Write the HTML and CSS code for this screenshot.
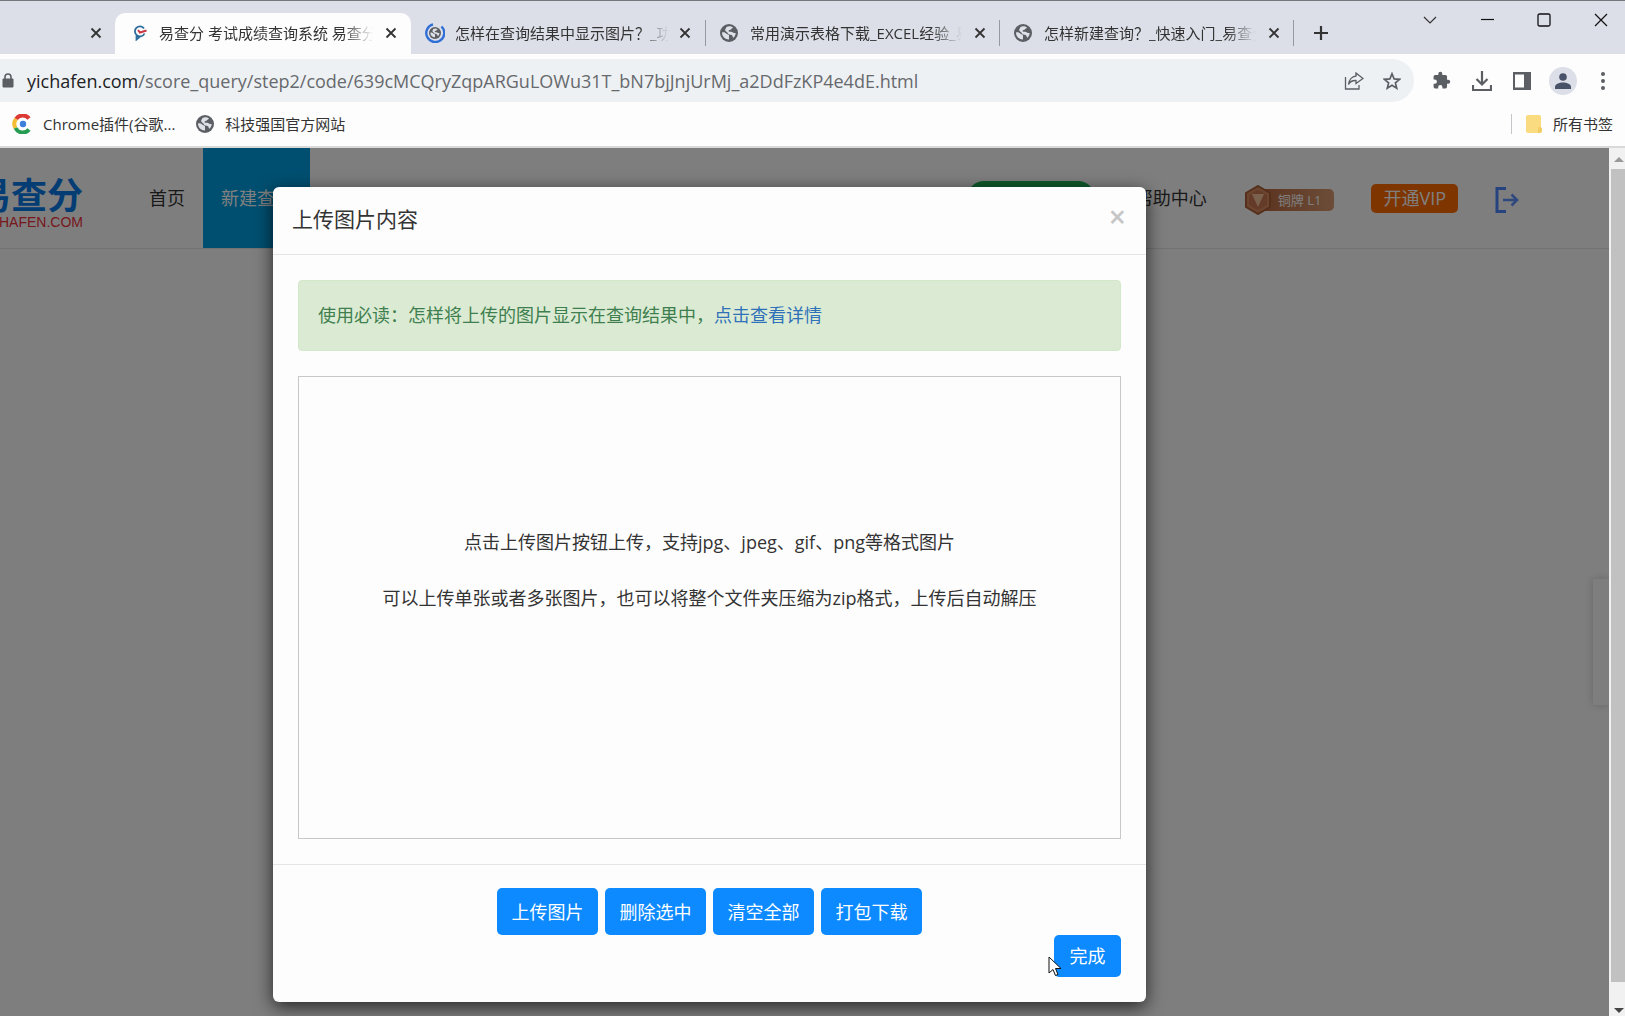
FILE: index.html
```html
<!DOCTYPE html>
<html lang="zh-CN">
<head>
<meta charset="utf-8">
<title>易查分 考试成绩查询系统</title>
<link rel="stylesheet" href="styles.css">
</head>
<body>
<svg class="defs" aria-hidden="true">
  <symbol id="x" viewBox="0 0 12 12"><path d="M1.5 1.5l9 9M10.5 1.5l-9 9" stroke="currentColor" stroke-width="1.8" fill="none"/></symbol>
  <symbol id="globe" viewBox="0 0 18 18"><circle cx="9" cy="9" r="9" fill="#5b5e63"/><path d="M2 8.500c2-.5 3.500.2 4.500 1.300 1 1 2.500.5 2.500 2v3.700C5 15.500 2 12.500 2 8.500zM6.500 3C8 2 11 1.800 13 3.500c-.5 1-1.500.8-2 1.700-.5 1-2 .5-2.500 1.500-.3 1 1.500 1 2.800 1 1.500 0 2 1.800 4.400 1.300-.2 2-1 3.800-2.200 4.700-1-.4-.7-2.200-1.800-2.700-1.600-.6-3.200 0-3.700-1.500-.6-1.600-2.500-2-3-3.500z" fill="#dfe1e8"/></symbol>
</svg>
<div class="tabs">
  <div class="tab first"><button class="icon" aria-label="关闭"><svg width="12" height="12"><use href="#x"/></svg></button></div>
  <div class="tab active">
    <svg width="14" height="16" viewBox="0 0 14 16"><path d="M11 3.500A5 5 0 1 0 11.500 8.500M3.500 10.500v4l3.500-3" fill="none" stroke="#2d6c9c" stroke-width="1.800"/><path d="M5 5l2 2.500 6.500-2" fill="none" stroke="#c93644" stroke-width="2"/></svg>
    <span class="label">易查分 考试成绩查询系统 易查分</span>
    <button class="icon" aria-label="关闭"><svg width="12" height="12"><use href="#x"/></svg></button>
  </div>
  <div class="tab">
    <svg width="20" height="20" viewBox="0 0 20 20"><path d="M8 1.300A9 9 0 1 0 16.500 3.500" fill="none" stroke="#2f6fd6" stroke-width="2.400"/><use href="#globe" x="4" y="4" width="12" height="12"/></svg>
    <span class="label">怎样在查询结果中显示图片？_功能</span>
    <button class="icon" aria-label="关闭"><svg width="12" height="12"><use href="#x"/></svg></button>
  </div>
  <div class="tab ruled">
    <svg width="18" height="18"><use href="#globe"/></svg>
    <span class="label">常用演示表格下载_EXCEL经验_易</span>
    <button class="icon" aria-label="关闭"><svg width="12" height="12"><use href="#x"/></svg></button>
  </div>
  <div class="tab ruled">
    <svg width="18" height="18"><use href="#globe"/></svg>
    <span class="label">怎样新建查询？_快速入门_易查分</span>
    <button class="icon" aria-label="关闭"><svg width="12" height="12"><use href="#x"/></svg></button>
  </div>
  <button class="icon newtab" aria-label="新标签页"><svg width="16" height="16" viewBox="0 0 16 16"><path d="M8 1v14M1 8h14" stroke="currentColor" stroke-width="2.200"/></svg></button>
  <div class="window">
    <button class="icon" aria-label="搜索标签页"><svg width="14" height="14" viewBox="0 0 14 14"><path d="M1 4l6 6 6-6" fill="none" stroke="#333" stroke-width="1.200"/></svg></button>
    <button class="icon" aria-label="最小化"><svg width="14" height="14" viewBox="0 0 14 14"><path d="M1 6.500h13" stroke="#111" stroke-width="1.200"/></svg></button>
    <button class="icon" aria-label="最大化"><svg width="14" height="14" viewBox="0 0 14 14"><rect x="1" y="1" width="12" height="12" rx="1.500" fill="none" stroke="#111" stroke-width="1.300"/></svg></button>
    <button class="icon" aria-label="关闭窗口"><svg width="14" height="14" viewBox="0 0 14 14"><path d="M1 1l12 12M13 1L1 13" stroke="#111" stroke-width="1.200"/></svg></button>
  </div>
</div>
<div class="toolbar">
  <div class="omnibox">
    <svg width="14" height="16" viewBox="0 0 14 16"><path d="M3 6h10v8H3z" fill="#5b5e63" stroke="#5b5e63"/><path d="M5 6V4a3 3 0 0 1 6 0v2" fill="none" stroke="#5b5e63" stroke-width="1.600"/></svg>
    <span class="url"><b>yichafen.com</b>/score_query/step2/code/639cMCQryZqpARGuLOWu31T_bN7bjJnjUrMj_a2DdFzKP4e4dE.html</span>
    <button class="icon" aria-label="分享"><svg width="20" height="18" viewBox="0 0 20 18"><path d="M1.500 5v12h13.500v-4M12 1l7 5.500-7 5V8.500C8.500 8.300 6 9.500 4.500 12.500 5 8 8 4.500 12 4z" fill="none" stroke="#5b5e63" stroke-width="1.300"/></svg></button>
    <button class="icon" aria-label="收藏"><svg width="18" height="18" viewBox="0 0 18 18"><path d="M9 1.800l2.100 5.100 5.500.4-4.200 3.600 1.300 5.300L9 13.300l-4.700 2.900 1.300-5.300L1.400 7.300l5.500-.4z" fill="none" stroke="#5b5e63" stroke-width="1.700"/></svg></button>
  </div>
  <div class="actions">
    <button class="icon" aria-label="扩展程序"><svg width="19" height="19" viewBox="0 0 24 24"><path fill="#5b5e63" d="M20.500 11H19V7a2 2 0 0 0-2-2h-4V3.500a2.500 2.500 0 0 0-5 0V5H4a2 2 0 0 0-2 2v3.800h1.500a2.700 2.700 0 0 1 0 5.400H2V20a2 2 0 0 0 2 2h3.800v-1.500a2.700 2.700 0 0 1 5.400 0V22H17a2 2 0 0 0 2-2v-4h1.500a2.500 2.500 0 0 0 0-5z"/></svg></button>
    <button class="icon" aria-label="下载"><svg width="20" height="20" viewBox="0 0 20 20"><path d="M10 0v13M4.500 8l5.500 5.500L15.500 8M1 14v5h18v-5" fill="none" stroke="#5b5e63" stroke-width="2.200"/></svg></button>
    <button class="icon" aria-label="侧边栏"><svg width="18" height="18" viewBox="0 0 18 18"><path d="M0 0h18v18H0zM2 2.500v13h9v-13z" fill="#5b5e63" fill-rule="evenodd"/></svg></button>
    <button class="icon avatar" aria-label="用户"><svg width="16" height="16" viewBox="0 0 16 16"><circle cx="8" cy="4" r="3.800" fill="#48536a"/><path d="M0 16v-2c0-3 4-4.500 8-4.500s8 1.500 8 4.500v2z" fill="#48536a"/></svg></button>
    <button class="icon" aria-label="菜单"><svg width="4" height="18" viewBox="0 0 4 18"><g fill="#5b5e63"><circle cx="2" cy="2" r="2"/><circle cx="2" cy="9" r="2"/><circle cx="2" cy="16" r="2"/></g></svg></button>
  </div>
</div>
<div class="bookmarks">
  <a href="#"><svg width="20" height="20" viewBox="0 0 20 20"><g fill="none" stroke-width="4"><path d="M17 4.500A8 8 0 0 0 4 5" stroke="#dc3a35"/><path d="M4 5a8 8 0 0 0-.5 9" stroke="#f3bd35"/><path d="M3.500 14A8 8 0 0 0 17 15.500" stroke="#269c53"/></g><circle cx="11" cy="10" r="3.200" fill="#3d80dc"/></svg>Chrome插件(谷歌...</a>
  <a href="#"><svg width="18" height="18"><use href="#globe"/></svg>科技强国官方网站</a>
  <a class="all" href="#"><svg width="16" height="18" viewBox="0 0 16 18"><rect width="15" height="18" rx="2" fill="#fbdb7f"/><path d="M12 18v-4a2 2 0 0 1 4 0v2a2 2 0 0 1-2 2z" fill="#f3cb62"/></svg>所有书签</a>
</div>
<div class="view">
  <div class="page">
    <header class="site">
      <a class="logo" href="#"><span class="name">易查分</span><span class="domain">YICHAFEN.COM</span></a>
      <nav><a href="#">首页</a><a class="current" href="#">新建查询</a></nav>
      <a class="service" href="#">在线客服</a>
      <a class="help" href="#">帮助中心</a>
      <span class="badge"><svg width="28" height="30" viewBox="0 0 28 30"><path d="M14 1l12 7v14l-12 7-12-7V8z" fill="#d88a5e" stroke="#a85f38" stroke-width="2"/><path d="M14 5l9 5v10l-9 5-9-5V10z" fill="#c87750"/><path d="M8 9h12l-6 13z" fill="#f5c39c"/></svg><span>铜牌 L1</span></span>
      <a class="vip" href="#">开通VIP</a>
      <a class="exit" href="#" aria-label="退出"><svg width="24" height="26" viewBox="0 0 24 26"><path d="M11 1.500H2v23h9" fill="none" stroke="#4c86ff" stroke-width="3"/><path d="M8 13h14M16.500 7.500L22 13l-5.500 5.500" fill="none" stroke="#5e93ff" stroke-width="2.600"/></svg></a>
    </header>
    <aside class="side"></aside>
    <div class="backdrop">
      <section class="modal" role="dialog" aria-labelledby="title">
        <header class="head"><h1 id="title">上传图片内容</h1><button class="close" aria-label="关闭">×</button></header>
        <div class="content">
          <p class="alert">使用必读：怎样将上传的图片显示在查询结果中，<a href="#">点击查看详情</a></p>
          <div class="drop"><p>点击上传图片按钮上传，支持jpg、jpeg、gif、png等格式图片</p><p>可以上传单张或者多张图片，也可以将整个文件夹压缩为zip格式，上传后自动解压</p></div>
        </div>
        <footer class="foot">
          <div class="group"><button class="btn">上传图片</button><button class="btn">删除选中</button><button class="btn">清空全部</button><button class="btn">打包下载</button></div>
          <div class="done"><button class="btn small">完成</button><svg class="cursor" width="14" height="21" viewBox="0 0 14 21"><path d="M1 1v16l4-3.500 2.500 6 2.500-1-2.500-6H13z" fill="#fff" stroke="#111"/></svg></div>
        </footer>
      </section>
    </div>
  </div>
  <div class="scroll"><span class="up"></span><span class="thumb"></span><span class="down"></span></div>
</div>
</body>
</html>
```

FILE: styles.css
```css
* { box-sizing: border-box; }
body {
  margin: 0;
  min-height: 100vh;
  display: flex;
  flex-direction: column;
  overflow: hidden;
  background: #fdfdfd;
  color: #333;
  font-family: "Open Sans", "Noto Sans CJK SC", sans-serif;
  font-size: 18px;
  line-height: 24px;
}
p, h1 { margin: 0; font-weight: 400; }
a { color: inherit; text-decoration: none; }
button { font: inherit; color: inherit; border: 0; padding: 0; background: none; }
svg { flex: none; }
.defs { display: none; }
.icon { display: flex; align-items: center; justify-content: center; flex: none; }

.tabs {
  display: flex;
  height: 54px;
  padding-top: 12px;
  border-top: 1px solid #77787d;
  background: #dcdfe8;
  font-size: 15px;
}
.tab {
  display: flex;
  align-items: center;
  gap: 10px;
  width: 294px;
  padding: 0 14px 2px;
}
.tab .icon { margin-left: auto; }
.tab.first { width: 115px; padding-right: 13px; }
.tab.active { width: 296px; padding-left: 18px; gap: 12px; background: #fdfdfd; border-radius: 10px 10px 0 0; }
.tab.ruled { gap: 12px; height: 26px; margin-top: 7px; padding: 0 13px 0 14px; border-left: 1px solid #96999f; }
.label {
  flex: 1;
  overflow: hidden;
  white-space: nowrap;
  -webkit-mask-image: linear-gradient(to right, #000 86%, transparent);
  mask-image: linear-gradient(to right, #000 86%, transparent);
}
.newtab { height: 26px; margin-top: 7px; padding-left: 19px; border-left: 1px solid #96999f; }
.window { display: flex; gap: 43px; height: 14px; margin-left: auto; padding-right: 17px; }

.toolbar { display: flex; align-items: center; height: 48px; padding-top: 5px; }
.omnibox {
  flex: 1;
  display: flex;
  align-items: center;
  gap: 19px;
  height: 43px;
  padding-right: 13px;
  border-radius: 0 22px 22px 0;
  background: #eef1f3;
}
.url { flex: 1; margin-left: -6px; font-size: 18px; color: #66696d; white-space: nowrap; }
.url b { font-weight: 400; color: #202124; }
.actions { display: flex; align-items: center; gap: 21px; padding: 0 20px 0 18px; }
.avatar { width: 28px; height: 28px; margin: 0 3px 0 -3px; border-radius: 50%; background: #dcdfe8; }

.bookmarks {
  display: flex;
  align-items: center;
  gap: 21px;
  height: 46px;
  padding: 0 12px;
  border-bottom: 2px solid #d9d9d9;
  font-size: 15px;
}
.bookmarks a { display: flex; align-items: center; gap: 11px; }
.bookmarks .all { margin-left: auto; padding-left: 14px; border-left: 1px solid #c4c6ca; height: 20px; }

.view { flex: 1; display: flex; }
.page { flex: 1; display: grid; overflow: hidden; }
.site, .side, .backdrop { grid-area: 1 / 1; }
.site {
  align-self: start;
  display: flex;
  align-items: center;
  height: 101px;
  padding-right: 90px;
  border-bottom: 1px solid #e4e4e4;
  white-space: nowrap;
}
.logo {
  display: flex;
  flex-direction: column;
  align-items: flex-end;
  justify-content: center;
  width: 83px;
  margin-right: 48px;
  padding-top: 10px;
  overflow: hidden;
}
.name { font-size: 36px; line-height: 38px; font-weight: 700; color: #0878e8; }
.domain { font-family: "Liberation Sans", sans-serif; font-size: 14px; line-height: 14px; color: #f0303a; }
nav { display: flex; align-self: stretch; }
nav a { display: flex; align-items: center; padding: 0 18px; }
nav .current { width: 107px; background: #009ee0; color: #fff; }
.service { margin-left: auto; padding: 5px 28px; border-radius: 17px; background: #1fb254; color: #fff; }
.help { margin: 0 37px 0 40px; }
.badge { display: flex; align-items: center; padding-top: 3px; }
.badge span { margin-left: -14px; padding: 0 13px 0 20px; height: 22px; line-height: 22px; border-radius: 5px; background: linear-gradient(to right, #b8663c, #d99a72); color: #fff; font-size: 13px; }
.badge svg { z-index: 1; }
.vip { margin: 0 37px; padding: 2px 12px 3px; border-radius: 5px; background: #ff6a00; color: #fff; }
.exit { display: flex; padding-top: 3px; }
.side { align-self: start; justify-self: end; width: 16px; height: 126px; margin-top: 431px; background: #fdfdfd; box-shadow: 0 0 10px #ccc; }
.backdrop {
  z-index: 2;
  display: flex;
  justify-content: center;
  align-items: flex-start;
  padding: 39px 190px 14px 0;
  background: rgba(0, 0, 0, .5);
}
.modal { width: 873px; border-radius: 6px; background: #fdfdfd; box-shadow: 0 5px 18px rgba(0, 0, 0, .7); }
.head { display: flex; justify-content: space-between; align-items: center; height: 68px; padding: 0 20px 4px 19px; border-bottom: 1px solid #e5e5e5; }
.head h1 { font-size: 21px; }
.close { padding-bottom: 4px; font-size: 30px; font-weight: 600; color: #c6c6c6; }
.content { padding: 25px; }
.alert { padding: 22px 19px 23px; border: 1px solid #d3e8c8; border-radius: 4px; background: #dbebd3; color: #3f7f4f; }
.alert a { color: #2f71b8; }
.drop { display: flex; flex-direction: column; gap: 32px; height: 463px; margin-top: 25px; padding-top: 153px; border: 1px solid #c8c8c8; text-align: center; }
.foot { padding: 23px 25px 25px; border-top: 1px solid #e5e5e5; }
.group { display: flex; justify-content: center; gap: 7px; }
.btn { width: 101px; height: 47px; border-radius: 5px; background: #0d8aff; color: #fff; }
.done { position: relative; display: flex; justify-content: flex-end; }
.btn.small { width: 67px; height: 42px; }
.cursor { position: absolute; right: 59px; top: 21px; }

.scroll { display: flex; flex-direction: column; align-items: flex-end; width: 16px; background: #f1f1f1; }
.up, .down { width: 0; margin-right: 1px; border: 5px solid transparent; }
.up { margin-top: 4px; margin-bottom: 7px; border-bottom-color: #999; }
.thumb { flex: 1; width: 14px; background: #c1c1c1; }
.down { margin-top: 26px; margin-bottom: -2px; border-top-color: #444; }
```
